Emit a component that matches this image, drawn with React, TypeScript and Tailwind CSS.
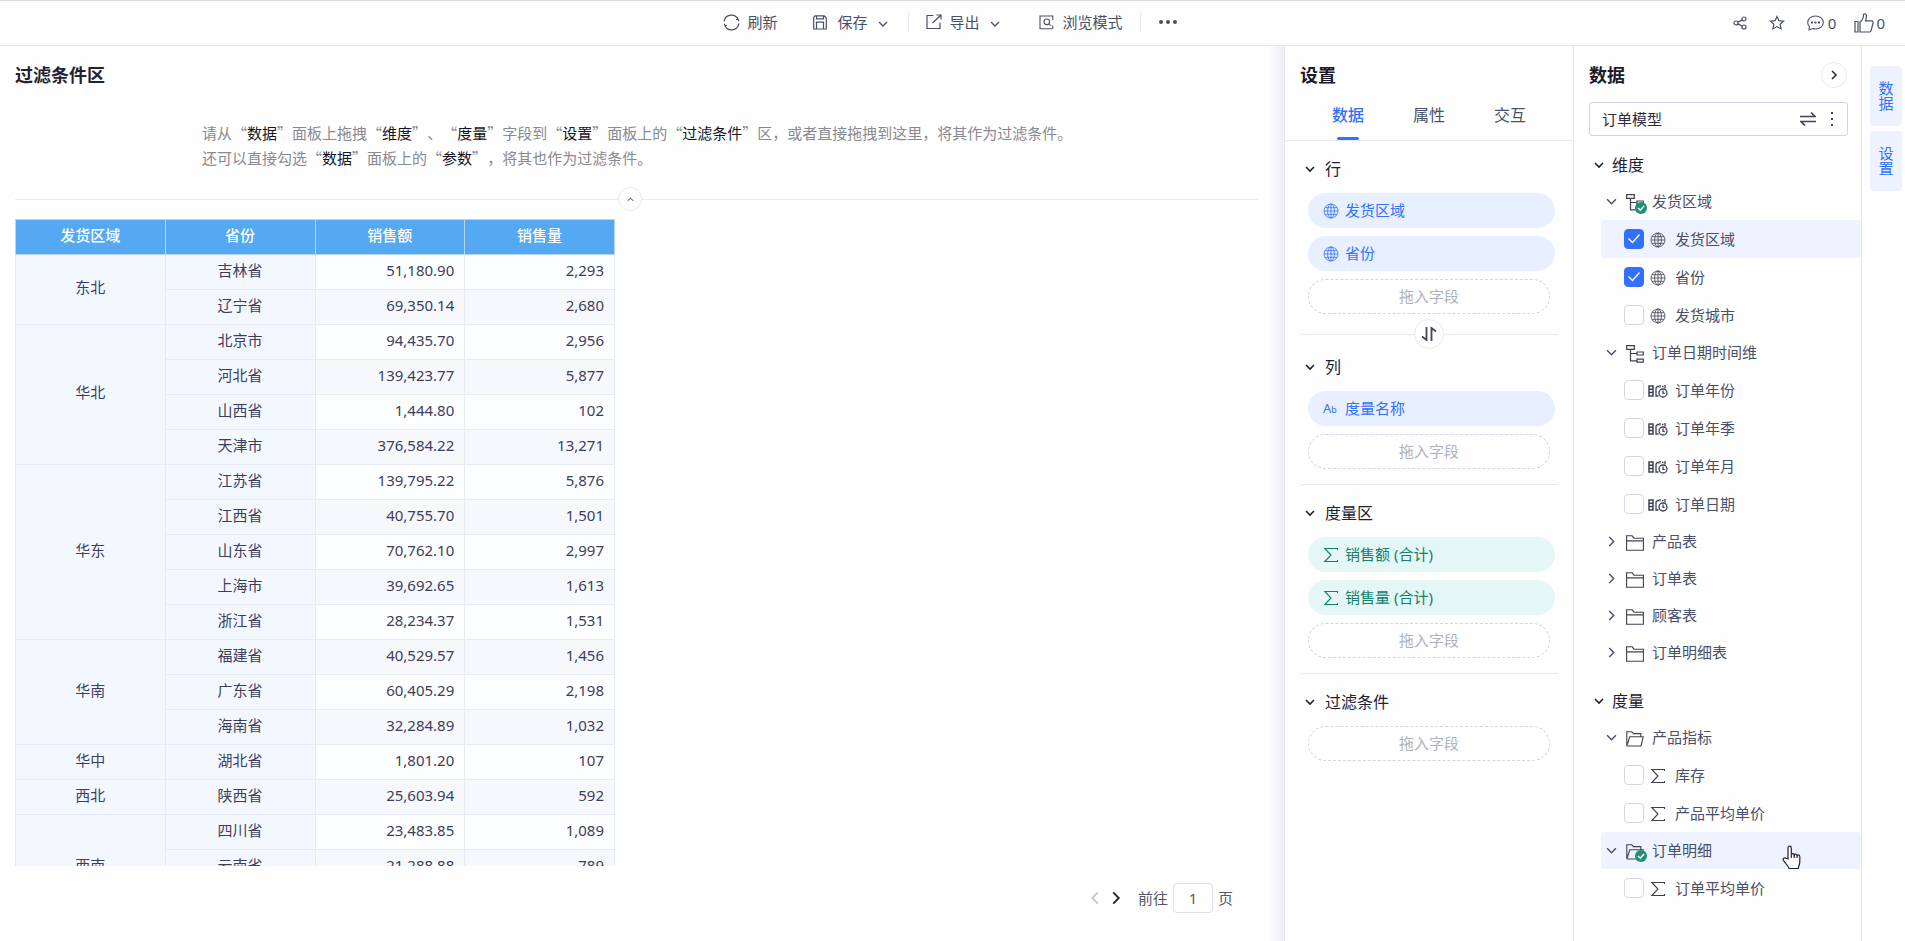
import { ReactNode } from "react";
import clsx from "clsx";

type IconName = "globe" | "date" | "sigma" | "text" | "tree" | "folder" | "folderOpen";

function Chevron({ dir = "down", className }: { dir?: "down" | "right" | "left" | "up"; className?: string }) {
  const points = {
    down: "1,3 5,7 9,3",
    up: "1,7 5,3 9,7",
    right: "3,1 7,5 3,9",
    left: "7,1 3,5 7,9",
  };
  return (
    <svg viewBox="0 0 10 10" fill="none" stroke="currentColor" strokeWidth="1.3" className={clsx("shrink-0", className)} aria-hidden="true">
      <polyline points={points[dir]} />
    </svg>
  );
}

function Glyph({ name }: { name: IconName }) {
  switch (name) {
    case "globe":
      return (
        <svg width="16" height="16" viewBox="0 0 16 16" fill="none" stroke="currentColor" strokeWidth="0.8">
          <circle cx="8" cy="8" r="7" />
          <ellipse cx="8" cy="8" rx="3.4" ry="7" />
          <path d="M8 1v14M1 8h14M2 4.7h12M2 11.3h12" />
        </svg>
      );
    case "date":
      return (
        <svg width="20" height="14" viewBox="0 0 20 14" fill="none" stroke="currentColor" strokeWidth="1.3">
          <path d="M1 2h4v10H1zM1 5.3h4M1 8.6h4" strokeWidth="1.5" />
          <path d="M10.500 12H8V4l1.500-1.500h1.500M12 1v2.500M14 2.500h1.500M17 1v3.500" />
          <circle cx="15" cy="9" r="4" />
          <path d="M15 6.500v2.800h1.800" />
        </svg>
      );
    case "sigma":
      return (
        <svg width="16" height="16" viewBox="0 0 16 16" fill="none" stroke="currentColor" strokeWidth="1.1">
          <path d="M14.5 3V1.5H1.8L8 8l-6.2 6.5h12.7V13" />
        </svg>
      );
    case "tree":
      return (
        <svg width="18" height="18" viewBox="0 0 18 18" fill="none" stroke="currentColor" strokeWidth="1.2">
          <path d="M.7.7h7.6v3.6H.7zM4.5 4.3v11.5H11M4.5 8.5H11" />
          <path d="M11 7h6.3v3H11zM11 14.2h6.3v3H11z" />
        </svg>
      );
    case "folder":
      return (
        <svg width="18" height="16" viewBox="0 0 18 16" fill="none" stroke="currentColor" strokeWidth="1.1">
          <path d="M.6 15.2V.8h5.6L8 3.2h9.4v12zM.6 5.9h16.8" />
        </svg>
      );
    case "folderOpen":
      return (
        <svg width="18" height="16" viewBox="0 0 18 16" fill="none" stroke="currentColor" strokeWidth="1.1">
          <path d="M.8 15V.8h5L7.5 2.6h7.3v3.2M.8 15l3-9.2h13.4L15 15H.8" />
        </svg>
      );
    default:
      return (
        <span className="flex items-baseline leading-none">
          <span className="text-[13px]">A</span>
          <span className="text-[9px]">b</span>
        </span>
      );
  }
}

const rows = [
  { region: "东北", span: 2, province: "吉林省", amount: "51,180.90", count: "2,293" },
  { province: "辽宁省", amount: "69,350.14", count: "2,680" },
  { region: "华北", span: 4, province: "北京市", amount: "94,435.70", count: "2,956" },
  { province: "河北省", amount: "139,423.77", count: "5,877" },
  { province: "山西省", amount: "1,444.80", count: "102" },
  { province: "天津市", amount: "376,584.22", count: "13,271" },
  { region: "华东", span: 5, province: "江苏省", amount: "139,795.22", count: "5,876" },
  { province: "江西省", amount: "40,755.70", count: "1,501" },
  { province: "山东省", amount: "70,762.10", count: "2,997" },
  { province: "上海市", amount: "39,692.65", count: "1,613" },
  { province: "浙江省", amount: "28,234.37", count: "1,531" },
  { region: "华南", span: 3, province: "福建省", amount: "40,529.57", count: "1,456" },
  { province: "广东省", amount: "60,405.29", count: "2,198" },
  { province: "海南省", amount: "32,284.89", count: "1,032" },
  { region: "华中", span: 1, province: "湖北省", amount: "1,801.20", count: "107" },
  { region: "西北", span: 1, province: "陕西省", amount: "25,603.94", count: "592" },
  { region: "西南", span: 3, province: "四川省", amount: "23,483.85", count: "1,089" },
  { province: "云南省", amount: "21,288.88", count: "789" },
  { province: "", amount: "", count: "" },
];

const stickyCell = "border border-[#e6eaf7] bg-[#f3f8ff] pb-[5px] text-center font-normal";
const valueCell = "border border-[#e8eaf4] pr-[10px] pb-[5px] text-right";

function DataTable() {
  return (
    <table className="w-[600px] table-fixed border-collapse text-[15px] leading-5 text-[#3d3d5c]">
      <thead>
        <tr className="h-[35px] bg-[#55a8f2] text-white">
          {["发货区域", "省份", "销售额", "销售量"].map((title) => (
            <th key={title} scope="col" className="border border-[#b5d8fa] pb-[5px] font-medium">
              {title}
            </th>
          ))}
        </tr>
      </thead>
      <tbody>
        {rows.map((row, i) => (
          <tr key={i} className={clsx("h-[35px]", i % 2 ? "bg-[#f7f8fc]" : "bg-[#fdfeff]")}>
            {row.region && (
              <th scope="rowgroup" rowSpan={row.span} className={stickyCell}>
                {row.region}
              </th>
            )}
            <td className={stickyCell}>{row.province}</td>
            <td className={valueCell}>{row.amount}</td>
            <td className={valueCell}>{row.count}</td>
          </tr>
        ))}
      </tbody>
    </table>
  );
}

function Toolbar() {
  return (
    <header className="grid h-[46px] shrink-0 grid-cols-[1fr_auto_1fr] items-center border-y border-t-[#dcdcdc] border-b-[#e6e7ec] text-[15px] text-[#4a5068]">
      <div />
      <div className="flex items-center pb-1 pt-[2px]">
        <button className="flex items-center gap-[7px]">
          <svg width="17" height="17" viewBox="0 0 17 17" fill="none" stroke="currentColor" strokeWidth="1.2">
            <path d="M1.2 7.3A7.3 7.3 0 0 1 15 5.2M15.8 9.7A7.3 7.3 0 0 1 2 11.8" />
            <path d="M15.8 7.2 15 5.2l-2 .6M1.2 9.8l.8 2 2-.6" />
          </svg>
          刷新
        </button>
        <button className="ml-9 flex items-center">
          <svg width="14" height="15" viewBox="0 0 14 15" fill="none" stroke="currentColor" strokeWidth="1.2">
            <path d="M.7 2.2V14h12.6V3l-2-2.2H2zM3.5.8v3h7v-3M3.5 14V7.2h7V14" />
          </svg>
          <span className="ml-[10px]">保存</span>
          <Chevron className="ml-[10px] mt-1 w-[10px]" />
        </button>
        <span className="ml-5 h-5 w-px bg-[#e6e7ec]" />
        <button className="ml-[17px] flex items-center">
          <svg width="16" height="16" viewBox="0 0 16 16" fill="none" stroke="currentColor" strokeWidth="1.2">
            <path d="M7.5 1.5H1v13h13V8.5M6.5 9 15 1M10.5 1H15v4.5" />
          </svg>
          <span className="ml-2">导出</span>
          <Chevron className="ml-[10px] mt-1 w-[10px]" />
        </button>
        <button className="ml-[39px] flex items-center gap-[9px]">
          <svg width="15" height="15" viewBox="0 0 15 15" fill="none" stroke="currentColor" strokeWidth="1.1">
            <path d="M13.8 5V1H1v12.8h12.5M13.8 10.5v3.3" />
            <circle cx="7.8" cy="6.8" r="2.8" />
            <path d="m9.8 8.8 2 1.8" />
          </svg>
          浏览模式
        </button>
        <span className="ml-[17px] h-5 w-px bg-[#e6e7ec]" />
        <button aria-label="more" className="ml-[18px] flex gap-[3px] pr-[5px]">
          <i className="size-1 rounded-full bg-current" />
          <i className="size-1 rounded-full bg-current" />
          <i className="size-1 rounded-full bg-current" />
        </button>
      </div>
      <div className="flex items-center justify-end pr-5">
        <button aria-label="share">
          <svg width="14" height="14" viewBox="0 0 14 14" fill="none" stroke="currentColor" strokeWidth="1.2">
            <circle cx="3" cy="7" r="2" />
            <circle cx="11" cy="3" r="2" />
            <circle cx="11" cy="11" r="2" />
            <path d="m4.8 6.1 4.4-2.2M4.8 7.9l4.4 2.2" />
          </svg>
        </button>
        <button aria-label="favorite" className="ml-[22px]">
          <svg width="16" height="16" viewBox="0 0 16 16" fill="none" stroke="currentColor" strokeWidth="1.2">
            <path d="m8 1.500 1.900 4.200 4.600.500-3.400 3.100 1 4.600L8 11.600l-4.100 2.300 1-4.600L1.500 6.200l4.600-.500z" />
          </svg>
        </button>
        <button className="ml-[22px] flex items-center gap-1">
          <svg width="17" height="16" viewBox="0 0 17 16" fill="none" stroke="currentColor" strokeWidth="1.1">
            <path d="M2 15l.5-3.200A6.300 6.300 0 0 1 .700 7.500C.7 3.800 4 1 8.500 1s7.800 2.800 7.800 6.500S13 14 8.500 14c-1 0-2-.2-2.800-.5z" />
            <path d="M4 7.500h2M7.500 7.500h2M11 7.500h2" strokeWidth="2" />
          </svg>
          0
        </button>
        <button className="ml-[18px] flex items-center gap-[2px]">
          <svg width="20" height="20" viewBox="0 0 20 20" fill="none" stroke="currentColor" strokeWidth="1.2">
            <path d="M1 8.500h3v10.500H1zM6 9c2.500-1.500 3.500-4 3.500-7 0-1.800 3-1.500 3 1 0 2-.5 3.500-1 4.800h6c1.500 0 1.800 1.200 1.400 2.500l-1.700 7c-.3 1.200-1 1.700-2 1.700H6z" />
          </svg>
          0
        </button>
      </div>
    </header>
  );
}

function Strong({ children }: { children: ReactNode }) {
  return (
    <>
      “<span className="text-[#14151f]">{children}</span>”
    </>
  );
}

function Report() {
  return (
    <main className="flex min-w-0 flex-1 flex-col pl-[15px]">
      <h2 className="mt-4 text-lg leading-[26px] font-bold text-[#22232f]">过滤条件区</h2>
      <div className="mt-8 pl-[187px] font-['Noto_Sans_CJK_SC',sans-serif] text-[15px] leading-[25px] text-[#888991] [text-spacing-trim:space-all]">
        <p>
          请从<Strong>数据</Strong>面板上拖拽<Strong>维度</Strong>、<Strong>度量</Strong>字段到<Strong>设置</Strong>面板上的
          <Strong>过滤条件</Strong>区，或者直接拖拽到这里，将其作为过滤条件。
        </p>
        <p>
          还可以直接勾选<Strong>数据</Strong>面板上的<Strong>参数</Strong>，将其也作为过滤条件。
        </p>
      </div>
      <div className="mt-[17px] mr-[10px] flex h-6 items-center">
        <span className="h-px w-[603px] bg-[#ebecf3]" />
        <button aria-label="collapse" className="flex size-6 items-center justify-center rounded-full border border-[#e8e9f2] text-[#22232f]">
          <Chevron dir="up" className="w-[7px]" />
        </button>
        <span className="h-px flex-1 bg-[#ebecf3]" />
      </div>
      <div className="mt-2 min-h-0 flex-1 overflow-hidden">
        <DataTable />
      </div>
      <footer className="flex h-[75px] shrink-0 items-start justify-end pt-[17px] pr-[35px] text-[15px] leading-[30px] text-[#55586a]">
        <button aria-label="previous page" className="flex h-[30px] items-center text-[#c3c6d2]">
          <Chevron dir="left" className="w-[14px]" />
        </button>
        <button aria-label="next page" className="ml-[7px] flex h-[30px] items-center text-[#22232f]">
          <Chevron dir="right" className="w-[14px]" />
        </button>
        <label className="ml-[15px] flex gap-[5px]">
          前往
          <input defaultValue="1" className="h-[30px] w-10 rounded border border-[#dcdfe8] text-center" />
          页
        </label>
      </footer>
    </main>
  );
}

function Field({ icon, green, children }: { icon: IconName; green?: boolean; children: ReactNode }) {
  return (
    <div
      className={clsx(
        "flex h-[35px] items-center rounded-full pl-[15px] text-[15px]",
        green ? "bg-[#e4f7f6] text-[#12806c]" : "bg-[#e8f0ff] text-[#3370ff]",
      )}
    >
      <span className="flex w-[22px]">
        <Glyph name={icon} />
      </span>
      {children}
    </div>
  );
}

function Section({ title, children }: { title: string; children?: ReactNode }) {
  return (
    <section>
      <h3 className="flex h-6 items-center gap-[10px] pl-5 text-base text-[#1f2030]">
        <Chevron className="w-[10px] stroke-[1.6]" />
        {title}
      </h3>
      <div className="mt-3 flex flex-col gap-2 pr-[18px] pl-[23px]">
        {children}
        <div className="mr-[5px] flex h-[35px] items-center justify-center rounded-full border border-dashed border-[#d3d5e4] text-[15px] text-[#b0b2c0]">
          拖入字段
        </div>
      </div>
    </section>
  );
}

function Settings() {
  return (
    <aside className="w-[289px] shrink-0 border-l border-[#e6e7ec]">
      <h2 className="mt-4 pl-[15px] text-lg leading-[26px] font-bold text-[#1b1c28]">设置</h2>
      <nav className="mt-[10px] flex gap-[49px] border-b border-[#e8e9f0] pl-[47px] text-base text-[#4a5068]">
        {["数据", "属性", "交互"].map((tab, i) => (
          <button key={tab} className={clsx("flex flex-col items-center pt-[5px]", i === 0 && "font-medium text-[#3370ff]")}>
            {tab}
            <span className={clsx("mt-[10px] h-[3px] w-[22px] rounded-full", i === 0 && "bg-[#3370ff]")} />
          </button>
        ))}
      </nav>
      <div className="pt-4">
        <Section title="行">
          <Field icon="globe">发货区域</Field>
          <Field icon="globe">省份</Field>
        </Section>
        <div className="mx-[15px] mt-[5px] mb-[6px] flex items-center">
          <span className="h-px flex-1 bg-[#e8e9f0]" />
          <button aria-label="swap rows and columns" className="flex size-[30px] items-center justify-center rounded-full border border-[#e8e9f0] text-[#41445a]">
            <svg width="16" height="16" viewBox="0 0 16 16" fill="none" stroke="currentColor" strokeWidth="1.800">
              <path d="M5.500 1v13L1 10.500M10.500 15V2L15 5.500" />
            </svg>
          </button>
          <span className="h-px flex-1 bg-[#e8e9f0]" />
        </div>
        <Section title="列">
          <Field icon="text">度量名称</Field>
        </Section>
        <hr className="mx-[15px] mt-[15px] mb-4 border-[#e8e9f0]" />
        <Section title="度量区">
          <Field icon="sigma" green>
            销售额 (合计)
          </Field>
          <Field icon="sigma" green>
            销售量 (合计)
          </Field>
        </Section>
        <hr className="mx-[15px] mt-[15px] mb-4 border-[#e8e9f0]" />
        <Section title="过滤条件" />
      </div>
    </aside>
  );
}

interface GroupProps {
  icon: IconName;
  title: string;
  open?: boolean;
  used?: boolean;
  active?: boolean;
}

function Group({ icon, title, open, used, active }: GroupProps) {
  return (
    <div className={clsx("relative flex h-[37px] items-center rounded pl-[5px] text-[#4a5068]", active && "bg-[#eef3ff]")}>
      <button aria-label={title} className="flex">
        <Chevron dir={open ? "down" : "right"} className="w-[11px]" />
      </button>
      <span className="relative mt-[3px] ml-[9px] w-[18px] text-[#3f4152]">
        <Glyph name={icon} />
        {used && (
          <svg width="12" height="12" viewBox="0 0 12 12" className="absolute -right-[3px] -bottom-[2px]" fill="none">
            <circle cx="6" cy="6" r="6" fill="#1f8f74" />
            <path d="m3 6 2.300 2.200L9 4" stroke="#fff" strokeWidth="1.500" />
          </svg>
        )}
      </span>
      <span className="ml-2">{title}</span>
      {active && (
        <svg width="19" height="25" viewBox="0 0 19 25" className="absolute top-[13px] right-[60px]" fill="#fff" stroke="#22232f" strokeWidth="1.200">
          <path d="M6 14V3c0-2.500 3.300-2.500 3.300 0v6.500c.5-1.300 2.700-1.200 2.900.400.600-1.100 2.600-.9 2.900.600.800-.9 2.700-.6 2.700 1.200V17c0 3-1.500 4-1.500 6.500H7C6.500 20.500 3 18 1.500 15.500.4 13.500 2.500 12 4 13.300z" />
          <path d="M9.300 9.500V13M12.200 10v3M15.100 10.500V13" />
        </svg>
      )}
    </div>
  );
}

interface LeafProps {
  icon: IconName;
  title: string;
  checked?: boolean;
  active?: boolean;
}

function Leaf({ icon, title, checked, active }: LeafProps) {
  return (
    <label className={clsx("flex h-[38px] items-center rounded pl-[23px] text-[#4a5068]", active && "bg-[#eef3ff]")}>
      <span className="relative flex">
        <input
          type="checkbox"
          defaultChecked={checked}
          className="peer size-5 appearance-none rounded border border-[#d3d6e6] bg-white checked:border-[#3370ff] checked:bg-[#3370ff]"
        />
        <svg viewBox="0 0 20 20" fill="none" stroke="#fff" strokeWidth="1.300" className="pointer-events-none absolute inset-0 hidden peer-checked:block">
          <path d="m4.500 9.500 4 4 7-8" />
        </svg>
      </span>
      <span className="mt-[2px] ml-1 flex w-5 justify-center text-[#3f4152]">
        <Glyph name={icon} />
      </span>
      <span className="ml-[7px]">{title}</span>
    </label>
  );
}

function TreeTitle({ children }: { children: ReactNode }) {
  return (
    <h3 className="flex h-6 items-center gap-2 pl-5 text-base text-[#1f2030]">
      <Chevron className="w-[10px] stroke-[1.6]" />
      {children}
    </h3>
  );
}

function DataPanel() {
  return (
    <aside className="w-[288px] shrink-0 border-l border-[#e6e7ec] text-[15px]">
      <div className="mt-4 flex h-[26px] items-center justify-between pr-[14px] pl-[15px]">
        <h2 className="text-lg leading-[26px] font-bold text-[#1b1c28]">数据</h2>
        <button aria-label="collapse panel" className="flex size-[26px] items-center justify-center rounded-full border border-[#e8e9f2] text-[#22232f]">
          <Chevron dir="right" className="w-[10px] stroke-[1.5]" />
        </button>
      </div>
      <div className="mt-[14px] mr-[13px] ml-[15px] flex h-[34px] items-center rounded-[3px] border border-[#d0d3e3] pr-[14px] text-[#41445a]">
        <select aria-label="数据" className="flex-1 appearance-none pl-3 text-[#2b2d3d]">
          <option>订单模型</option>
        </select>
        <button aria-label="switch model">
          <svg width="16" height="16" viewBox="0 0 16 16" fill="none" stroke="currentColor" strokeWidth="1.700">
            <path d="M0 5.500h15L11 1.500M16 10.500H1l4 4" />
          </svg>
        </button>
        <button aria-label="model menu" className="ml-[15px] flex flex-col gap-1">
          <i className="size-[2px] bg-current" />
          <i className="size-[2px] bg-current" />
          <i className="size-[2px] bg-current" />
        </button>
      </div>
      <div className="pt-[17px]">
        <TreeTitle>维度</TreeTitle>
        <div className="mt-[6px] pl-[27px]">
          <Group icon="tree" title="发货区域" open used />
          <Leaf icon="globe" title="发货区域" checked active />
          <Leaf icon="globe" title="省份" checked />
          <Leaf icon="globe" title="发货城市" />
          <Group icon="tree" title="订单日期时间维" open />
          <Leaf icon="date" title="订单年份" />
          <Leaf icon="date" title="订单年季" />
          <Leaf icon="date" title="订单年月" />
          <Leaf icon="date" title="订单日期" />
          <Group icon="folder" title="产品表" />
          <Group icon="folder" title="订单表" />
          <Group icon="folder" title="顾客表" />
          <Group icon="folder" title="订单明细表" />
        </div>
      </div>
      <div className="pt-[18px]">
        <TreeTitle>度量</TreeTitle>
        <div className="mt-[6px] pl-[27px]">
          <Group icon="folderOpen" title="产品指标" open />
          <Leaf icon="sigma" title="库存" />
          <Leaf icon="sigma" title="产品平均单价" />
          <Group icon="folderOpen" title="订单明细" open used active />
          <Leaf icon="sigma" title="订单平均单价" />
        </div>
      </div>
    </aside>
  );
}

export default function App() {
  return (
    <div className="flex h-screen flex-col overflow-hidden bg-[#fefefe] font-['Noto_Sans','Noto_Sans_CJK_SC',sans-serif]">
      <Toolbar />
      <div className="flex min-h-0 flex-1">
        <Report />
        <div className="w-4 shrink-0 bg-linear-to-r from-[#fefefe] to-[#eeeff6]" />
        <Settings />
        <DataPanel />
        <div className="flex w-11 shrink-0 flex-col gap-[5px] border-l border-[#e6e7ec] pt-5 pr-[3px] pl-2">
          {["数据", "设置"].map((tab) => (
            <button key={tab} className="flex h-[60px] items-center justify-center rounded bg-[#edf2ff] px-2 text-[15px] leading-[15px] text-[#3370ff]">
              <span className="w-[15px]">{tab}</span>
            </button>
          ))}
        </div>
      </div>
    </div>
  );
}
